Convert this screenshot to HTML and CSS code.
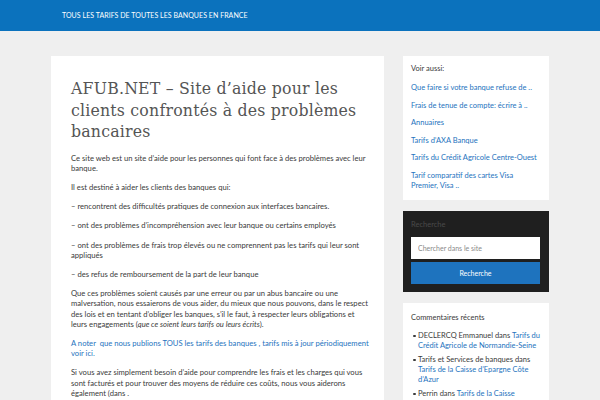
FILE: index.html
```html
<!DOCTYPE html>
<html lang="fr">
<head>
<meta charset="utf-8">
<title>AFUB.NET</title>
<link rel="stylesheet" href="styles.css">
</head>
<body>
<header class="site-header">
  <div class="site-description">TOUS LES TARIFS DE TOUTES LES BANQUES EN FRANCE</div>
</header>
<div class="site-content">
  <main class="content-card">
    <h1 class="entry-title">AFUB.NET – Site d’aide pour les clients confrontés à des problèmes bancaires</h1>
    <div class="entry-content">
      <p>Ce site web est un site d’aide pour les personnes qui font face à des problèmes avec leur banque.</p>
      <p>Il est destiné à aider les clients des banques qui:</p>
      <p>– rencontrent des difficultés pratiques de connexion aux interfaces bancaires.</p>
      <p>– ont des problèmes d’incompréhension avec leur banque ou certains employés</p>
      <p>– ont des problèmes de frais trop élevés ou ne comprennent pas les tarifs qui leur sont appliqués</p>
      <p>– des refus de remboursement de la part de leur banque</p>
      <p>Que ces problèmes soient causés par une erreur ou par un abus bancaire ou une malversation, nous essaierons de vous aider, du mieux que nous pouvons, dans le respect des lois et en tentant d’obliger les banques, s’il le faut, à respecter leurs obligations et leurs engagements (<em>que ce soient leurs tarifs ou leurs écrits</em>).</p>
      <p class="link-para"><a href="#">A noter&nbsp; que nous publions TOUS les tarifs des banques , tarifs mis à jour périodiquement voir ici.</a></p>
      <p>Si vous avez simplement besoin d’aide pour comprendre les frais et les charges qui vous sont facturés et pour trouver des moyens de réduire ces coûts, nous vous aiderons également (dans .</p>
    </div>
  </main>
  <aside class="sidebar">
    <section class="widget">
      <h2 class="widget-title">Voir aussi:</h2>
      <ul class="link-list">
        <li><a href="#">Que faire si votre banque refuse de ..</a></li>
        <li><a href="#">Frais de tenue de compte: écrire à ..</a></li>
        <li><a href="#">Annuaires</a></li>
        <li><a href="#">Tarifs d’AXA Banque</a></li>
        <li><a href="#">Tarifs du Crédit Agricole Centre-Ouest</a></li>
        <li><a href="#">Tarif comparatif des cartes Visa Premier, Visa ..</a></li>
      </ul>
    </section>
    <section class="widget widget-search">
      <h2 class="widget-title">Recherche</h2>
      <form class="search-form">
        <input class="search-field" type="search" placeholder="Chercher dans le site">
        <button class="search-submit" type="button">Recherche</button>
      </form>
    </section>
    <section class="widget widget-comments">
      <h2 class="widget-title">Commentaires récents</h2>
      <ul class="comment-list">
        <li>DECLERCQ Emmanuel dans <a href="#">Tarifs du Crédit Agricole de Normandie-Seine</a></li>
        <li>Tarifs et Services de banques dans <a href="#">Tarifs de la Caisse d’Epargne Côte d’Azur</a></li>
        <li>Perrin dans <a href="#">Tarifs de la Caisse d’Epargne Ile-de-France</a></li>
      </ul>
    </section>
  </aside>
</div>
</body>
</html>
```

FILE: styles.css
```css
html, body {
  margin: 0;
  padding: 0;
}
body {
  background: #efefef;
  font-family: "Lato", "Open Sans", sans-serif;
  color: #3a3a3a;
  overflow: hidden;
  height: 400px;
}
a {
  color: #1e73be;
  text-decoration: none;
}
.site-header {
  height: 31px;
  background: #0b72bd;
  box-sizing: border-box;
  padding-left: 62px;
}
.site-description {
  color: #ffffff;
  font-size: 7px;
  line-height: 31px;
  letter-spacing: 0.05px;
}
.site-content {
  display: flex;
  align-items: flex-start;
  gap: 19px;
  padding: 25px 0 0 51px;
}
.content-card {
  width: 333px;
  box-sizing: border-box;
  background: #ffffff;
  padding: 22px 15px 20px 20px;
  min-height: 400px;
}
.entry-title {
  font-family: "DejaVu Serif Condensed", "DejaVu Serif", serif;
  font-weight: normal;
  font-size: 17.5px;
  letter-spacing: 0.2px;
  line-height: 21.5px;
  color: #555555;
  margin: 0 0 10px;
}
.entry-content p {
  font-size: 7.65px;
  line-height: 10.2px;
  margin: 0 0 9px;
  color: #3a3a3a;
}
.sidebar {
  width: 146px;
  display: flex;
  flex-direction: column;
  gap: 11px;
}
.widget {
  background: #ffffff;
  padding: 8px 9px 9px 8px;
  font-size: 7.5px;
  line-height: 10px;
}
.widget-title {
  font-size: 7.5px;
  font-weight: normal;
  line-height: 10px;
  margin: 0 0 9px;
  color: #3a3a3a;
}
.link-list {
  list-style: none;
  margin: 0;
  padding: 0;
}
.link-list li {
  margin-bottom: 7.6px;
}
.link-list li:last-child {
  margin-bottom: 0;
}
.widget-search {
  background: #1f1f1f;
  padding: 9px 9px 8px 8px;
}
.widget-search .widget-title {
  color: #4a4a4a;
  margin-bottom: 7px;
}
.search-form {
  display: flex;
  flex-direction: column;
  gap: 3px;
}
.search-field {
  height: 22px;
  box-sizing: border-box;
  border: none;
  margin: 0;
  padding: 0 7px;
  font-family: inherit;
  font-size: 7px;
  background: #ffffff;
  color: #777;
}
.search-field::placeholder {
  color: #8a8a8a;
}
.search-submit {
  height: 22px;
  border: none;
  margin: 0;
  background: #1e73be;
  color: #ffffff;
  font-family: inherit;
  font-size: 7px;
}
.widget-comments {
  padding-top: 10px;
}
.widget-comments .widget-title {
  margin-bottom: 8px;
}
.comment-list {
  margin: 0;
  padding: 0 0 0 7px;
  list-style: none;
}
.comment-list li {
  position: relative;
  margin-bottom: 4px;
}
.comment-list li::before {
  content: "";
  position: absolute;
  left: -5px;
  top: 4px;
  width: 2.5px;
  height: 2.5px;
  border-radius: 50%;
  background: #3a3a3a;
}
```
